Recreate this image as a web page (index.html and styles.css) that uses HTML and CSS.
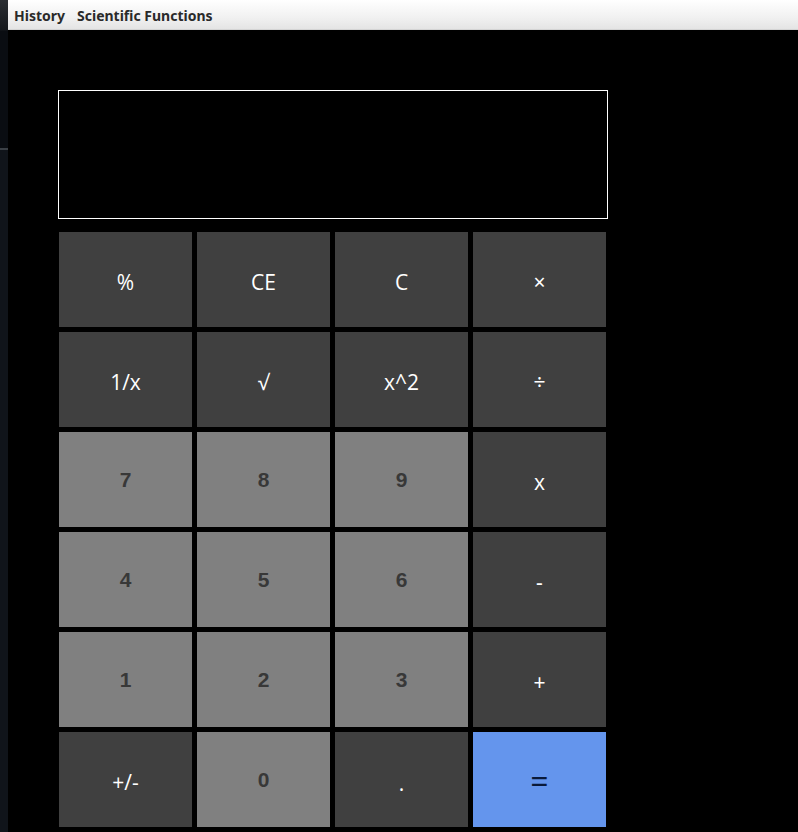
FILE: index.html
```html
<!DOCTYPE html>
<html>
<head>
<meta charset="utf-8">
<link rel="stylesheet" href="styles.css">
</head>
<body>
<div class="screen">
  <div class="desk">
    <div class="desk-top"></div>
    <div class="desk-bottom"></div>
  </div>
  <div class="window">
    <div class="menubar">
      <span class="menu-item">History</span>
      <span class="menu-item">Scientific Functions</span>
    </div>
    <div class="content">
      <div class="display"></div>
      <div class="keys">
        <button class="key op">%</button>
        <button class="key op">CE</button>
        <button class="key op">C</button>
        <button class="key op sym">×</button>
        <button class="key op">1/x</button>
        <button class="key op">√</button>
        <button class="key op">x^2</button>
        <button class="key op sym">÷</button>
        <button class="key num">7</button>
        <button class="key num">8</button>
        <button class="key num">9</button>
        <button class="key op">x</button>
        <button class="key num">4</button>
        <button class="key num">5</button>
        <button class="key num">6</button>
        <button class="key op sym">-</button>
        <button class="key num">1</button>
        <button class="key num">2</button>
        <button class="key num">3</button>
        <button class="key op sym">+</button>
        <button class="key op">+/-</button>
        <button class="key num">0</button>
        <button class="key op dot">.</button>
        <button class="key equals">=</button>
      </div>
    </div>
  </div>
</div>
</body>
</html>
```
FILE: styles.css
```css
html, body {
  margin: 0;
  padding: 0;
  background: #000;
  width: 798px;
  height: 832px;
  overflow: hidden;
}

.screen {
  display: flex;
  width: 798px;
  height: 832px;
}

.desk {
  width: 8px;
  display: flex;
  flex-direction: column;
}

.desk-top {
  height: 148px;
  background: linear-gradient(#2b2e33 0, #15181c 30px, #0a0d12 31px, #0a0d12 100%);
  border-bottom: 2px solid #3b4046;
}

.desk-bottom {
  flex: 1;
  background: #10141a;
}

.window {
  flex: 1;
  display: flex;
  flex-direction: column;
  background: #000;
}

.menubar {
  border-bottom: 1px solid #d4d4d4;
  background: linear-gradient(#ffffff, #f1f1f1 60%, #e4e4e4);
  display: flex;
  align-items: center;
  gap: 12px;
  padding-left: 6px;
  padding-top: 2px;
  box-sizing: border-box;
  height: 30px;
}

.menu-item {
  font-family: "Noto Sans", "Open Sans", sans-serif;
  font-weight: 700;
  font-size: 14px;
  color: #2a2a2a;
  letter-spacing: 0;
}

.content {
  padding-top: 60px;
  padding-left: 50px;
}

.display {
  width: 550px;
  height: 129px;
  box-sizing: border-box;
  border: 1px solid #ffffff;
  background: #000;
  margin-bottom: 13px;
}

.keys {
  margin-left: 1px;
  display: grid;
  grid-template-columns: repeat(4, 133px);
  grid-auto-rows: 95px;
  column-gap: 5px;
  row-gap: 5px;
}

.key {
  border: none;
  margin: 0;
  padding: 0;
  display: flex;
  align-items: center;
  justify-content: center;
}

.op {
  background: #404040;
  color: #ffffff;
  font-family: "Open Sans", "Noto Sans", sans-serif;
  font-size: 21px;
  padding-top: 4px;
}

.op.sym {
  font-size: 21px;
  font-family: "Noto Sans", "Open Sans", sans-serif;
}

.op.dot {
  padding-top: 6px;
}

.num {
  background: #808080;
  color: #383838;
  font-family: "Liberation Sans", Arial, sans-serif;
  font-weight: 700;
  font-size: 21px;
}

.equals {
  background: #6495ed;
  color: #0a1a3a;
  font-family: "Noto Sans", "Open Sans", sans-serif;
  font-size: 32px;
  padding-top: 2px;
}
```
